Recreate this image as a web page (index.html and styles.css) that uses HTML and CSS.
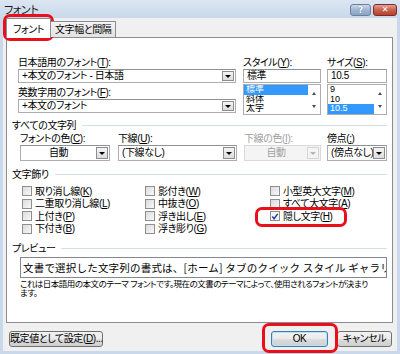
FILE: index.html
```html
<!DOCTYPE html>
<html lang="ja">
<head>
  <meta charset="UTF-8">
  <title>フォント</title>
  <link rel="stylesheet" href="styles.css">
</head>
<body>
  <div class="window">
    <div class="titlebar">
      <span class="title">フォント</span>
      <div class="caption-btns">
        <span class="cbtn help">?</span>
        <span class="cbtn close">✕</span>
      </div>
    </div>
    <div class="dialog">
      <div class="tabs">
        <div class="tab active">フォント</div>
        <div class="tab">文字幅と間隔</div>
      </div>
      <div class="panel">
        <div class="font-row">
          <div class="col-name">
            <div class="lbl">日本語用のフォント(<u>T</u>):</div>
            <div class="combo"><span>+本文のフォント - 日本語</span><i class="drop"></i></div>
            <div class="lbl lbl2">英数字用のフォント(<u>F</u>):</div>
            <div class="combo"><span>+本文のフォント</span><i class="drop"></i></div>
          </div>
          <div class="col-style">
            <div class="lbl">スタイル(<u>Y</u>):</div>
            <div class="textbox">標準</div>
            <div class="listbox">
              <ul>
                <li class="sel">標準</li>
                <li>斜体</li>
                <li>太字</li>
              </ul>
              <div class="vscroll"><i class="up"></i><i class="down"></i></div>
            </div>
          </div>
          <div class="col-size">
            <div class="lbl">サイズ(<u>S</u>):</div>
            <div class="textbox">10.5</div>
            <div class="listbox">
              <ul>
                <li>9</li>
                <li>10</li>
                <li class="sel">10.5</li>
              </ul>
              <div class="vscroll"><i class="up"></i><i class="down"></i></div>
            </div>
          </div>
        </div>

        <div class="group first">すべての文字列</div>
        <div class="all-row">
          <div class="field f-color">
            <div class="lbl">フォントの色(<u>C</u>):</div>
            <div class="select center"><span>自動</span><i class="btn"></i></div>
          </div>
          <div class="field f-line">
            <div class="lbl">下線(<u>U</u>):</div>
            <div class="select"><span>(下線なし)</span><i class="btn"></i></div>
          </div>
          <div class="field f-linecolor disabled">
            <div class="lbl">下線の色(<u>I</u>):</div>
            <div class="select center"><span>自動</span><i class="btn"></i></div>
          </div>
          <div class="field f-dot">
            <div class="lbl">傍点(<u>;</u>)</div>
            <div class="select"><span>(傍点なし)</span><i class="btn"></i></div>
          </div>
        </div>

        <div class="group">文字飾り</div>
        <div class="effects">
          <label class="chk"><i class="box"></i>取り消し線(<u>K</u>)</label>
          <label class="chk"><i class="box"></i>二重取り消し線(<u>L</u>)</label>
          <label class="chk"><i class="box"></i>上付き(<u>P</u>)</label>
          <label class="chk"><i class="box"></i>下付き(<u>B</u>)</label>
          <label class="chk"><i class="box"></i>影付き(<u>W</u>)</label>
          <label class="chk"><i class="box"></i>中抜き(<u>O</u>)</label>
          <label class="chk"><i class="box"></i>浮き出し(<u>E</u>)</label>
          <label class="chk"><i class="box"></i>浮き彫り(<u>G</u>)</label>
          <label class="chk"><i class="box"></i>小型英大文字(<u>M</u>)</label>
          <label class="chk"><i class="box"></i>すべて大文字(<u>A</u>)</label>
          <label class="chk"><i class="box checked"><svg width="9" height="9" viewBox="0 0 9 9"><path d="M1.5 4.5 L3.5 7 L7.5 1.5" fill="none" stroke="#1c3fa8" stroke-width="1.6"/></svg></i>隠し文字(<u>H</u>)</label>
        </div>

        <div class="group">プレビュー</div>
        <div class="preview">文書で選択した文字列の書式は、[ホーム] タブのクイック スタイル ギャラリーで定義されています。</div>
        <div class="desc">これは日本語用の本文のテーマ フォントです。現在の文書のテーマによって、使用されるフォントが決まり<br>ます。</div>
      </div>

      <div class="footer">
        <button class="btn-std wide">既定値として設定(<u>D</u>)...</button>
        <div class="ok-cancel">
          <button class="btn-std default">OK</button>
          <button class="btn-std">キャンセル</button>
        </div>
      </div>
    </div>

    <span class="mark mark-tab"></span>
    <span class="mark mark-hidden"></span>
    <span class="mark mark-ok"></span>
  </div>
</body>
</html>
```

FILE: styles.css
```css
*{
  margin: 0;
  padding: 0;
  box-sizing: border-box;
}
body{
  font-family: "Liberation Sans", "Noto Sans CJK JP", sans-serif;
  font-size: 10px;
  font-feature-settings: "palt";
  letter-spacing: -0.4px;
  color: #000;
  background: #fff;
}
u{
  text-decoration: underline;
}
.window{
  position: relative;
  width: 400px;
  height: 354px;
  padding: 0 3px 3px;
  background: #c9d8ea;
  overflow: hidden;
}
.titlebar{
  height: 18px;
  margin: 0 -3px;
  padding: 0 3px 0 4px;
  display: flex;
  align-items: center;
  justify-content: space-between;
  background: linear-gradient(#dce6f2, #c9d8ea);
}
.title{
  font-size: 11px;
  color: #1a1a1a;
}
.caption-btns{
  display: flex;
  gap: 2px;
  margin-top: 1px;
}
.cbtn{
  height: 12px;
  border: 1px solid #6d7f99;
  border-radius: 3px;
  display: flex;
  align-items: center;
  justify-content: center;
  color: #fff;
  font-family: "DejaVu Sans", sans-serif;
  font-size: 9px;
  font-weight: bold;
  letter-spacing: 0;
}
.cbtn.help{
  width: 21px;
  background: linear-gradient(#cbd9ea, #9fb5d2 50%, #8aa4c6);
  text-shadow: 0 0 1px #3e5878;
}
.cbtn.close{
  width: 24px;
  border-color: #7a2b25;
  background: linear-gradient(#e3a196, #c8604f 50%, #b8402d);
  font-size: 8px;
}
.dialog{
  height: 333px;
  padding: 0 4px 0 3px;
  background: #f0f0f0;
}

/* tabs */
.tabs{
  height: 19px;
  display: flex;
  align-items: flex-end;
  position: relative;
  z-index: 1;
}
.tab{
  height: 16px;
  padding: 0 4px;
  border: 1px solid #898c95;
  border-bottom: none;
  background: linear-gradient(#f3f3f3, #e2e2e2);
  line-height: 15px;
  margin-left: -1px;
}
.tab.active{
  width: 45px;
  height: 20px;
  margin: 0 0 -1px 0;
  background: #fff;
  text-align: center;
  line-height: 21px;
}
.panel{
  height: 286px;
  border: 1px solid #898c95;
  background: #fff;
  padding: 19px 5px 0 5px;
}
.lbl{
  height: 11px;
  line-height: 11px;
  margin-bottom: 1px;
  white-space: nowrap;
}

/* font names, style, size */
.font-row{
  display: flex;
  margin-left: 6px;
}
.col-name{
  width: 218px;
  margin-right: 7px;
}
.col-style{
  width: 78px;
  margin-right: 6px;
}
.col-size{
  width: 60px;
}
.lbl2{
  margin-top: 4px;
}
.combo, .textbox{
  position: relative;
  height: 14px;
  border: 1px solid #abadb3;
  border-top-color: #8e9199;
  background: #fff;
  line-height: 12px;
  padding-left: 3px;
  white-space: nowrap;
}
.combo .drop{
  position: absolute;
  right: 1px;
  top: 1px;
  width: 12px;
  height: 10px;
  border: 1px solid #8d8d8d;
  background: linear-gradient(#f4f4f4, #dcdcdc);
}
.drop::after, .select .btn::after{
  content: "";
  position: absolute;
  left: 50%;
  top: 50%;
  margin: -1px 0 0 -3px;
  border-left: 3px solid transparent;
  border-right: 3px solid transparent;
  border-top: 3px solid #000;
}
.listbox{
  position: relative;
  height: 31px;
  margin-top: 1px;
  border: 1px solid #abadb3;
  background: #fff;
  display: flex;
  overflow: hidden;
}
.listbox ul{
  flex: 1;
  list-style: none;
}
.listbox li{
  height: 9.5px;
  line-height: 9.5px;
  padding-left: 2px;
  font-size: 9px;
  letter-spacing: 0;
  overflow: hidden;
}
.listbox li.sel{
  background: #3399ff;
  color: #fff;
}
.vscroll{
  width: 12px;
  display: flex;
  flex-direction: column;
  justify-content: space-between;
  align-items: center;
  padding: 7px 0 6px;
}
.vscroll i{
  display: block;
  border-left: 2px solid transparent;
  border-right: 2px solid transparent;
}
.vscroll .up{
  border-bottom: 3px solid #4d4d4d;
}
.vscroll .down{
  border-top: 3px solid #4d4d4d;
}

/* group headers */
.group{
  display: flex;
  align-items: center;
  height: 11px;
  line-height: 11px;
  margin-top: 8px;
  white-space: nowrap;
}
.group.first{
  margin-top: 5px;
}
.group::after{
  content: "";
  flex: 1;
  height: 1px;
  margin-left: 6px;
  background: #d5dfe5;
}

/* all text row */
.all-row{
  display: flex;
  margin: 2px 0 0 8px;
}
.f-color{
  width: 90px;
  margin-right: 8px;
}
.f-line{
  width: 119px;
  margin-right: 7px;
}
.f-linecolor{
  width: 77px;
  margin-right: 6px;
}
.f-dot{
  width: 60px;
}
.select{
  position: relative;
  height: 16px;
  border: 1px solid #abadb3;
  border-top-color: #8e9199;
  background: #fff;
  line-height: 14px;
  padding-left: 3px;
  white-space: nowrap;
  overflow: hidden;
}
.select.center{
  padding: 0 13px 0 0;
  text-align: center;
}
.select .btn{
  position: absolute;
  right: 1px;
  top: 1px;
  width: 12px;
  height: 12px;
  border: 1px solid #8d8d8d;
  background: linear-gradient(#f4f4f4, #dcdcdc);
}
.disabled .lbl, .disabled .select{
  color: #a0a0a0;
}
.disabled .select{
  border-color: #d9d9d9;
  background: #f4f4f4;
}
.disabled .btn{
  border-color: #d5d5d5;
  background: #f4f4f4;
}
.disabled .btn::after{
  border-top-color: #b5b5b5;
}

/* effects */
.effects{
  display: grid;
  grid-template-columns: 123px 125px 1fr;
  grid-template-rows: repeat(4, 12.5px);
  grid-auto-flow: column;
  margin: 5px 0 0 10px;
}
.chk{
  display: flex;
  align-items: center;
  white-space: nowrap;
  line-height: 11px;
}
.box{
  width: 10px;
  height: 10px;
  margin-right: 3px;
  border: 1px solid #8f8f8f;
  background: linear-gradient(135deg, #dcdcdc, #f8f8f8);
  display: flex;
  align-items: center;
  justify-content: center;
}
.box.checked{
  background: #f4f4f4;
}

/* preview */
.preview{
  height: 21px;
  margin: 3px 0 0 8px;
  border: 1px solid #828790;
  padding-left: 2px;
  overflow: hidden;
  white-space: nowrap;
  font-family: "Noto Sans CJK JP", sans-serif;
  font-size: 10.5px;
  line-height: 19px;
  font-feature-settings: normal;
  letter-spacing: 0.2px;
}
.desc{
  margin: 2px 0 0 8px;
  font-size: 8.5px;
  line-height: 9px;
  letter-spacing: -0.5px;
  white-space: nowrap;
}

/* footer buttons */
.footer{
  display: flex;
  justify-content: space-between;
  margin-top: 8px;
  padding-left: 3px;
}
.ok-cancel{
  display: flex;
  gap: 9px;
  margin-right: 1px;
}
.btn-std{
  height: 16px;
  width: 55px;
  border: 1px solid #707070;
  border-radius: 3px;
  background: linear-gradient(#f2f2f2, #ebebeb 50%, #dddddd 50%, #cfcfcf);
  font-family: inherit;
  font-size: 10px;
  font-feature-settings: "palt";
  letter-spacing: -0.4px;
  line-height: 14px;
  white-space: nowrap;
  color: #000;
}
.btn-std.wide{
  width: 94px;
}
.btn-std.default{
  width: 57px;
  border-color: #3c7fb1;
  box-shadow: inset 0 0 0 1px #b6e2f9;
}

/* red highlight marks */
.mark{
  position: absolute;
  border: 3px solid #e8101a;
  border-radius: 7px;
}
.mark-tab{
  left: 3px;
  top: 14px;
  width: 51px;
  height: 27px;
}
.mark-hidden{
  left: 255px;
  top: 207px;
  width: 92px;
  height: 20px;
}
.mark-ok{
  left: 262px;
  top: 323px;
  width: 76px;
  height: 30px;
}
```
